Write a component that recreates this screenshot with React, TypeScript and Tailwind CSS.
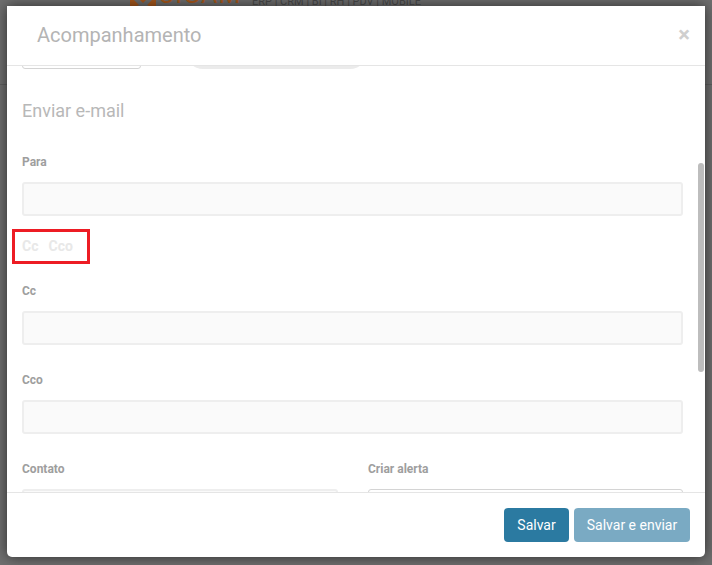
export default function App() {
  return (
    <div className="relative w-[712px] h-[565px] overflow-hidden bg-[#6f6f6f] pt-[6px] pl-[7px] font-['Roboto',sans-serif]">
      <div className="absolute left-0 top-[84px] w-full h-px bg-[#5f5f5f]" />
      <svg className="absolute left-[130px] top-0" width="26" height="6" viewBox="0 0 26 6">
        <path d="M0 0h4l5 5-2 1H0zM26 0h-4l-5 5 2 1h7z" fill="#a9591c" />
        <path d="M10 0h6l-3 3z" fill="#a9591c" />
      </svg>
      <div className="absolute left-[158px] top-[-15px] text-[25px] leading-[20px] tracking-[1px] text-[#a9591c]">CIGAM</div>
      <div className="absolute left-[252px] top-[-4px] text-[11px] leading-[11px] text-[#4a4a4a]">ERP | CRM | BI | RH | PDV | MOBILE</div>
      <div className="relative w-[698px] h-[551px] bg-white rounded-b-[5px] flex flex-col shadow-[0_0_14px_rgba(0,0,0,0.6)]">
        <div className="h-[60px] shrink-0 border-b border-[#e5e5e5] flex items-center justify-between pl-[30px] pr-[15px] pb-px">
          <h4 className="text-[20px] leading-[22px] text-[#b4b4b4]">Acompanhamento</h4>
          <span className="text-[22px] leading-none font-bold text-[#cfcfcf]">×</span>
        </div>
        <div className="relative flex-1 min-h-0 overflow-hidden pl-[15px] pr-[22px]">
          <div className="flex items-end gap-[45px] h-[3px] overflow-hidden">
            <div className="shrink-0 w-[119px] h-[34px] border border-[#d4d4d4] rounded-[3px]" />
            <div className="shrink-0 w-[181px] h-[34px] bg-[#ebebeb] rounded-[17px]" />
          </div>
          <h5 className="mt-[32px] text-[18px] leading-[20px] text-[#b8b8b8]">Enviar e-mail</h5>
          <Label className="mt-[34px]">Para</Label>
          <Field />
          <div className="mt-[23px] h-[14px] flex gap-[10px] text-[14px] leading-[14px] font-bold text-[#e8e8e8]">
            <span>Cc</span>
            <span>Cco</span>
          </div>
          <Label className="mt-[31px]">Cc</Label>
          <Field />
          <Label className="mt-[28px]">Cco</Label>
          <Field />
          <div className="mt-[28px] grid grid-cols-[316px_315px] gap-x-[30px]">
            <div>
              <Label>Contato</Label>
              <div className="mt-[13px] h-[34px] bg-[#fafafa] border-2 border-[#eeeeee] rounded-[3px]" />
            </div>
            <div>
              <Label>Criar alerta</Label>
              <div className="mt-[13px] h-[34px] bg-white border border-[#d4d4d4] rounded-[3px]" />
            </div>
          </div>
          <div className="absolute right-[1px] top-[97px] w-[6px] h-[209px] rounded-[3px] bg-[#bdbdbd]" />
        </div>
        <div className="h-[65px] shrink-0 border-t border-[#e5e5e5] flex justify-end items-start gap-[5px] pt-[15px] pr-[15px]">
          <button className="h-[34px] w-[65px] rounded-[4px] bg-[#2b7aa1] text-white text-[14px]">Salvar</button>
          <button className="h-[34px] w-[116px] rounded-[4px] bg-[#7aaac3] text-white text-[14px]">Salvar e enviar</button>
        </div>
        <div className="absolute left-[5px] top-[223px] w-[78px] h-[35px] border-[3px] border-[#ed1c24]" />
      </div>
    </div>
  );
}

function Label({ children, className = '' }: { children: React.ReactNode; className?: string }) {
  return <div className={`h-[14px] text-[12px] leading-[14px] font-bold text-[#9e9e9e] ${className}`}>{children}</div>;
}

function Field() {
  return <div className="mt-[13px] h-[34px] bg-[#fafafa] border-2 border-[#eeeeee] rounded-[3px]" />;
}
